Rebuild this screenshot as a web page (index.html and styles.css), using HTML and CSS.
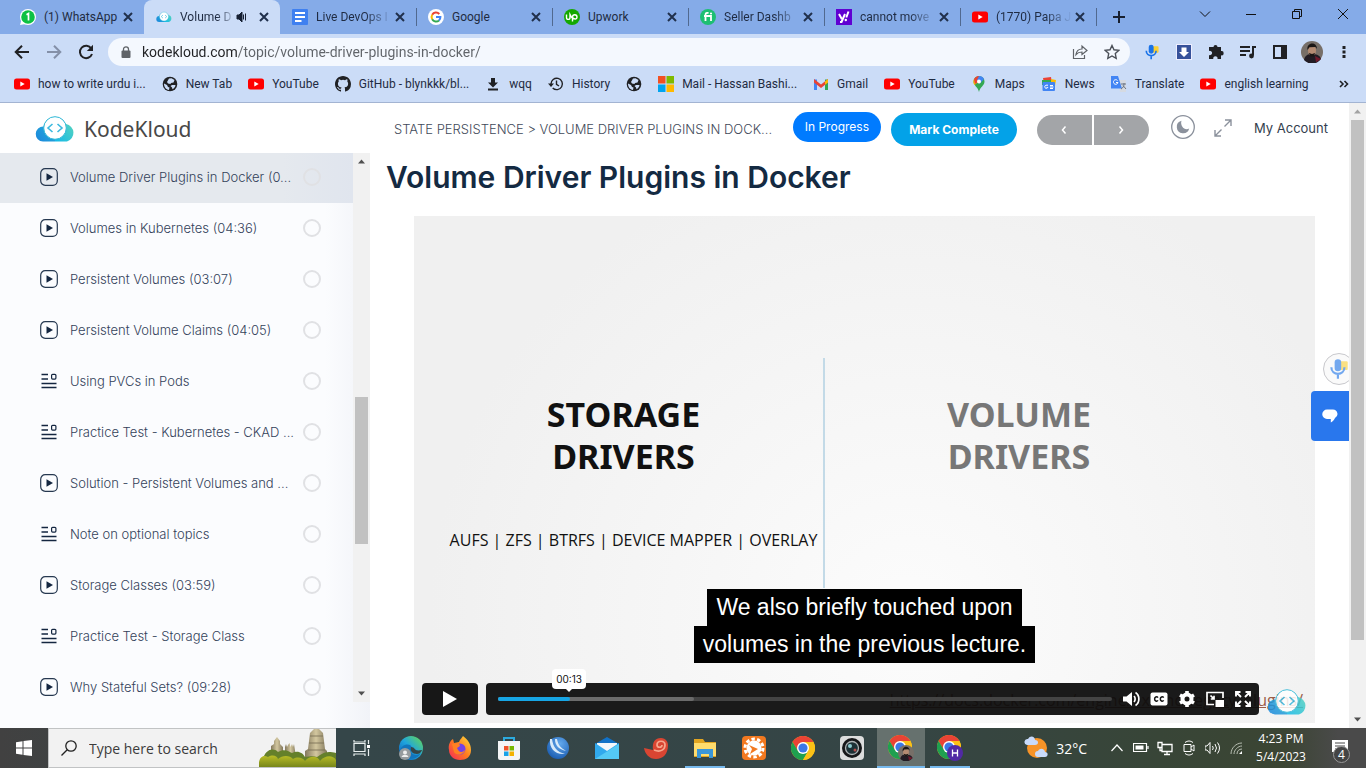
FILE: index.html
```html
<!DOCTYPE html>
<html lang="en">
<head>
<meta charset="utf-8">
<title>Volume Driver Plugins in Docker</title>
<link rel="stylesheet" href="styles.css">
</head>
<body>
<svg class="defs" aria-hidden="true">
  <defs>
    <linearGradient id="cloud-l" x1="0" y1="1" x2="1" y2="0"><stop offset="0" stop-color="#1b86dc"/><stop offset="1" stop-color="#25b7d8"/></linearGradient>
    <linearGradient id="cloud-r" x1="0" y1="1" x2="1" y2="0"><stop offset="0" stop-color="#12b9ea"/><stop offset="1" stop-color="#5ed6b8"/></linearGradient>
    <linearGradient id="edge" x1="0" y1="1" x2="1" y2="0"><stop offset="0" stop-color="#0b57b5"/><stop offset=".5" stop-color="#1fa5de"/><stop offset="1" stop-color="#6bdc4c"/></linearGradient>
    <linearGradient id="fire" x1="0" y1="1" x2="1" y2="0"><stop offset="0" stop-color="#f5255c"/><stop offset=".5" stop-color="#ff7a1f"/><stop offset="1" stop-color="#ffe03c"/></linearGradient>
    <radialGradient id="orb" cx=".6" cy=".3" r=".8"><stop offset="0" stop-color="#62a8ec"/><stop offset="1" stop-color="#1557ad"/></radialGradient>
    <linearGradient id="stone" x1="0" y1="0" x2="1" y2="0"><stop offset="0" stop-color="#83785c"/><stop offset=".5" stop-color="#d3c79f"/><stop offset="1" stop-color="#83785c"/></linearGradient>
    <linearGradient id="bush" x1="0" y1="0" x2="0" y2="1"><stop offset="0" stop-color="#b9bd26"/><stop offset="1" stop-color="#77861a"/></linearGradient>
  </defs>
  <symbol id="x" viewBox="0 0 16 16"><path d="M4 4l8 8M12 4l-8 8" stroke="#20304c" stroke-width="2" fill="none"/></symbol>
  <symbol id="yt" viewBox="0 0 16 16"><rect y="2.500" width="16" height="11" rx="2.500" fill="#f00"/><path d="M6.300 5.500v5l4.400-2.500z" fill="#fff"/></symbol>
  <symbol id="cloud" viewBox="0 0 40 26">
    <path d="M8 25.500a7.500 7.500 0 0 1 .5-15C10 5 14 2 20 3v22.500z" fill="url(#cloud-l)"/>
    <path d="M20 25.500V3c6 0 9 2 11 5a9 9 0 0 1 1 17.500z" fill="url(#cloud-r)"/>
    <circle cx="20" cy="12" r="11.300" fill="#fff" stroke="#2db7d6"/>
    <path d="M17.500 8l-4.500 4 4.500 4M22.500 8l4.500 4-4.500 4" fill="none" stroke="#3cb9df" stroke-width="1.600"/>
  </symbol>
  <symbol id="globe" viewBox="0 0 16 16"><circle cx="8" cy="8" r="7.300" fill="#202124"/><path d="M2 7.500l3 1.500 1 2 1.500.6L7 14C4 13.500 2 11 2 7.500zM7 2.500l2.500-.3L12.500 4l-1 2.500-2.500.4L8.500 8 6 7.500 5 6zM10 9h3.500c-.2 2-1.500 3.500-3 4.200L10 11.500 8.500 10z" fill="#cbdcf7"/></symbol>
  <symbol id="chrome" viewBox="0 0 24 24"><circle cx="12" cy="12" r="12" fill="#fbc116"/><path d="M1.600 6A12 12 0 0 1 22.400 6H12L6.800 15z" fill="#ea4335"/><path d="M1.600 6A12 12 0 0 0 12 24l5.200-9-5.200 2-5-2z" fill="#1fa050"/><path d="M12 6h10.400A12 12 0 0 1 12 24l5.200-9z" fill="#fbc116"/><circle cx="12" cy="12" r="6" fill="#fff"/><circle cx="12" cy="12" r="4.600" fill="#3b78e7"/></symbol>
  <symbol id="face" viewBox="0 0 22 22"><circle cx="11" cy="11" r="11" fill="#776f68"/><path d="M3 19c1-5 4-6 8-6s8 1 9 5a11 11 0 0 1-17 1z" fill="#221c24"/><path d="M14 15l6 3-5 3.300z" fill="#701a2b"/><ellipse cx="11" cy="9.500" rx="4" ry="5.500" fill="#b48b72"/><path d="M6.500 9C5 1 16 0 16 8l-1.500-2-6 .2zM8 12l3 1 3-1-1 3.500h-4z" fill="#1b1715"/></symbol>
  <symbol id="play" viewBox="0 0 18 18"><rect x=".7" y=".7" width="16.600" height="16.600" rx="4.500" fill="none" stroke="#263850" stroke-width="1.200"/><path d="M6.500 5.300v7.400L13 9z" fill="#142640"/></symbol>
  <symbol id="doc" viewBox="0 0 18 18"><path d="M1.500 2.500h6.500M1.500 7h6.500M1.500 11.500h15M1.500 15.500h15" stroke="#142640" stroke-width="1.300"/><rect x="11.600" y="2.300" width="4.300" height="4.800" rx="1" fill="none" stroke="#142640" stroke-width="1.200"/></symbol>
  <symbol id="mic" viewBox="0 0 20 22"><rect x="10" y="4" width="8" height="8" rx="1" fill="#fbd033"/><rect x="6" y="2" width="6" height="11" rx="3" fill="#1a73e8"/><path d="M3 9.500c0 8 12 8 12 0M9 15.500V20" fill="none" stroke="#1a73e8" stroke-width="2"/></symbol>
</svg>

<header class="browser">
  <nav class="tabs" aria-label="Tabs">
    <div class="tab"><svg class="i16" viewBox="0 0 16 16"><circle cx="8" cy="8" r="8" fill="#fff"/><path d="M0 16l1.500-5 4 4z" fill="#fff"/><circle cx="8" cy="8" r="6.800" fill="#0dc143"/><path d="M6.500 5.800L8.500 4.600V11.500" fill="none" stroke="#fff" stroke-width="1.700"/></svg><span class="tab-name">(1) WhatsApp</span><button class="close" aria-label="Close"><svg class="i16"><use href="#x"/></svg></button></div>
    <div class="tab active"><svg class="i16"><use href="#cloud"/></svg><span class="tab-name fade">Volume D</span><svg class="i12" viewBox="0 0 12 12"><path d="M1 4h2l3-3v10L3 8H1zM7.500 3.500v5M9.500 2.500v7" fill="#172033" stroke="#172033"/></svg><button class="close" aria-label="Close"><svg class="i16"><use href="#x"/></svg></button></div>
    <div class="tab"><svg class="i16" viewBox="0 0 16 16"><rect width="16" height="16" rx="1" fill="#3f80f0"/><path d="M3 4h10M3 8h10M3 12h6.500" stroke="#fff" stroke-width="1.800"/></svg><span class="tab-name fade">Live DevOps I</span><button class="close" aria-label="Close"><svg class="i16"><use href="#x"/></svg></button></div>
    <div class="tab"><svg class="i16" viewBox="0 0 16 16"><circle cx="8" cy="8" r="8" fill="#fff"/><g fill="none" stroke-width="2"><path d="M4.200 5.800A4.400 4.400 0 0 1 11.300 5" stroke="#ea4335"/><path d="M4.200 5.800a4.400 4.400 0 0 0 0 4.400" stroke="#fbbc05"/><path d="M4.200 10.200a4.400 4.400 0 0 0 6.800 1.200" stroke="#34a853"/><path d="M11 11.400a4.400 4.400 0 0 0 1.400-3.300H8" stroke="#4285f4"/></g></svg><span class="tab-name">Google</span><button class="close" aria-label="Close"><svg class="i16"><use href="#x"/></svg></button></div>
    <div class="tab"><svg class="i16" viewBox="0 0 16 16"><circle cx="8" cy="8" r="8" fill="#15a800"/><path d="M2.500 5.500v3c0 2.500 3.500 2.500 3.500 0v-3l2 3.500M8.500 12.500V8c0-3 4.500-3 4.500 0S9.500 10.500 8 7.500" fill="none" stroke="#fff" stroke-width="1.400"/></svg><span class="tab-name">Upwork</span><button class="close" aria-label="Close"><svg class="i16"><use href="#x"/></svg></button></div>
    <div class="tab"><svg class="i16" viewBox="0 0 16 16"><circle cx="8" cy="8" r="8" fill="#1dbf73"/><path d="M5.500 12V6c0-2 1-2.300 3-2M4 7h7v5" fill="none" stroke="#fff" stroke-width="1.800"/><circle cx="11" cy="4.500" r="1.100" fill="#fff"/></svg><span class="tab-name fade">Seller Dashb</span><button class="close" aria-label="Close"><svg class="i16"><use href="#x"/></svg></button></div>
    <div class="tab"><svg class="i16" viewBox="0 0 16 16"><rect width="16" height="16" fill="#6001d2"/><path d="M3 5l2.800 5M9 5l-3.500 8H4M12.500 2.500L10.300 8.500" fill="none" stroke="#fff" stroke-width="2"/><circle cx="9.800" cy="11" r="1.200" fill="#fff"/></svg><span class="tab-name fade">cannot move</span><button class="close" aria-label="Close"><svg class="i16"><use href="#x"/></svg></button></div>
    <div class="tab"><svg class="i16"><use href="#yt"/></svg><span class="tab-name fade">(1770) Papa J</span><button class="close" aria-label="Close"><svg class="i16"><use href="#x"/></svg></button></div>
    <button class="new-tab" aria-label="New tab"><svg class="i16" viewBox="0 0 16 16"><path d="M8 2v12M2 8h12" stroke="#182030" stroke-width="2"/></svg></button>
    <div class="window-buttons">
      <button aria-label="Search tabs"><svg class="i12" viewBox="0 0 12 12"><path d="M1 3.500l5 5 5-5" fill="none" stroke="#111"/></svg></button>
      <button aria-label="Minimize"><svg class="i12" viewBox="0 0 12 12"><path d="M1 6.500h10" stroke="#111"/></svg></button>
      <button aria-label="Restore"><svg class="i12" viewBox="0 0 12 12"><path d="M1.500 3.500h7v7h-7zM3.500 3.500v-2h7v7h-2" fill="none" stroke="#111"/></svg></button>
      <button aria-label="Close window"><svg class="i12" viewBox="0 0 12 12"><path d="M1 1l10 10M11 1L1 11" stroke="#111"/></svg></button>
    </div>
  </nav>
  <div class="toolbar">
    <div class="nav-buttons">
      <button aria-label="Back"><svg class="i16" viewBox="0 0 16 16"><path d="M15 8H2M8 1.700L1.700 8 8 14.300" fill="none" stroke="#202124" stroke-width="2"/></svg></button>
      <button aria-label="Forward"><svg class="i16" viewBox="0 0 16 16"><path d="M1 8h13M8 1.700L14.300 8 8 14.300" fill="none" stroke="#8490a8" stroke-width="2"/></svg></button>
      <button aria-label="Reload"><svg class="i16" viewBox="0 0 16 16"><path d="M13.300 4.500A6.200 6.200 0 1 0 14 10" fill="none" stroke="#202124" stroke-width="2"/><path d="M15 .8V7H8.800z" fill="#202124"/></svg></button>
    </div>
    <label class="omnibox">
      <svg class="i12" viewBox="0 0 12 12"><rect x="1.500" y="4.500" width="9" height="7.500" rx="1" fill="#5f6368"/><path d="M3.500 5V3.200c0-3.200 5-3.200 5 0V5" fill="none" stroke="#5f6368" stroke-width="1.300"/></svg>
      <input class="url" aria-label="Address" value="kodekloud.com/topic/volume-driver-plugins-in-docker/">
      <svg class="i16" viewBox="0 0 16 16"><path d="M1.500 5v9.500h11V11M4 10.500C4.500 7 7 5 10 5V2l5 4.500-5 4V8C7 8 5.500 8.700 4 10.500z" fill="none" stroke="#5f6368" stroke-width="1.200"/></svg>
      <svg class="i16" viewBox="0 0 16 16"><path d="M8 1.500l2 4.300 4.700.6-3.400 3.200.9 4.700L8 12l-4.200 2.300.9-4.700-3.400-3.200L6 5.800z" fill="none" stroke="#4b5058" stroke-width="1.400"/></svg>
    </label>
    <div class="extensions">
      <button aria-label="Voice typing"><svg class="i18"><use href="#mic"/></svg></button>
      <button aria-label="Downloader"><svg class="i16" viewBox="0 0 16 16"><rect x=".5" y=".5" width="15" height="15" fill="#36519a" stroke="#eef"/><path d="M5.500 3.500h5V8H13l-5 5-5-5h2.500z" fill="#fff"/></svg></button>
      <button aria-label="Extensions"><svg class="i16" viewBox="0 0 16 16"><path d="M1 5V3h4.500a2 2 0 1 1 4 0H13v4a2.200 2.200 0 1 1 0 4.300V15H9.500a2.200 2.200 0 1 0-4.200 0H1v-4a2.200 2.200 0 1 0 0-4z" fill="#202124"/></svg></button>
      <button aria-label="Media"><svg class="i16" viewBox="0 0 16 16"><path d="M0 3h10M0 7h10M0 11h6M13 11.500V3h3" fill="none" stroke="#202124" stroke-width="2"/><circle cx="11.500" cy="12" r="2.400" fill="#202124"/></svg></button>
      <button aria-label="Side panel"><svg class="i16" viewBox="0 0 16 16"><path d="M1 1h14v14H1zM3 3v10h6V3z" fill="#202124" fill-rule="evenodd"/></svg></button>
      <button aria-label="Profile"><svg class="i22"><use href="#face"/></svg></button>
      <button aria-label="Menu"><svg class="i16" viewBox="0 0 16 16"><path d="M6.500 2h3v3h-3zM6.500 6.500h3v3h-3zM6.500 11h3v3h-3z" fill="#202124"/></svg></button>
    </div>
  </div>
  <nav class="bookmarks" aria-label="Bookmarks">
    <a href="#"><svg class="i16"><use href="#yt"/></svg>how to write urdu i...</a>
    <a href="#"><svg class="i16"><use href="#globe"/></svg>New Tab</a>
    <a href="#"><svg class="i16"><use href="#yt"/></svg>YouTube</a>
    <a href="#"><svg class="i16" viewBox="0 0 16 16"><path fill="#202124" d="M8 0C3.580 0 0 3.580 0 8c0 3.540 2.290 6.530 5.470 7.590.4.070.55-.17.55-.38v-1.490c-2.010.37-2.530-.49-2.690-.94-.09-.23-.48-.94-.82-1.130-.28-.15-.68-.52-.01-.53.63-.01 1.080.58 1.230.82.72 1.210 1.870.87 2.330.66.07-.52.280-.87.510-1.070-1.780-.2-3.640-.89-3.640-3.950 0-.87.310-1.590.82-2.150-.08-.2-.36-1.020.08-2.120 0 0 .67-.21 2.200.82a7.600 7.600 0 0 1 4 0c1.530-1.040 2.200-.82 2.200-.82.440 1.100.160 1.920.08 2.120.51.560.82 1.270.82 2.150 0 3.070-1.870 3.750-3.650 3.950.29.250.54.730.54 1.480v2.200c0 .21.150.46.550.38A8 8 0 0 0 16 8c0-4.420-3.580-8-8-8z"/></svg>GitHub - blynkkk/bl...</a>
    <a href="#"><svg class="i16" viewBox="0 0 16 16"><path d="M6 2h4v4.500h3L8 11.500 3 6.500h3zM3 12.500h10v2H3z" fill="#202124"/></svg>wqq</a>
    <a href="#"><svg class="i16" viewBox="0 0 16 16"><path d="M3 8a5.700 5.700 0 1 1 1.700 4M8.500 4.500V8.300L11 10" fill="none" stroke="#202124" stroke-width="1.400"/><path d="M0 7.500h6L3 11z" fill="#202124"/></svg>History</a>
    <a href="#" aria-label="Web page"><svg class="i16"><use href="#globe"/></svg></a>
    <a href="#"><svg class="i16" viewBox="0 0 16 16"><path d="M0 0h7.500v7.500H0z" fill="#f25022"/><path d="M8.500 0H16v7.500H8.500z" fill="#7fba00"/><path d="M0 8.500h7.500V16H0z" fill="#00a4ef"/><path d="M8.500 8.500H16V16H8.500z" fill="#ffb900"/></svg>Mail - Hassan Bashi...</a>
    <a href="#"><svg class="i16" viewBox="0 0 16 16"><path d="M1 3.500h3V14H1z" fill="#4285f4"/><path d="M12 3.500h3V14h-3z" fill="#34a853"/><path d="M1 3l7 5.500L15 3v3.500L8 12 1 6.500z" fill="#ea4335"/><path d="M12 5.400l3-2.400v3.500l-3 2.300z" fill="#fbbc04"/></svg>Gmail</a>
    <a href="#"><svg class="i16"><use href="#yt"/></svg>YouTube</a>
    <a href="#"><svg class="i16" viewBox="0 0 16 16"><path d="M8 16C7 11 2.500 9.500 2.500 5.500a5.500 5.500 0 0 1 11 0C13.500 9.500 9 11 8 16z" fill="#34a853"/><path d="M3.500 9A5.500 5.500 0 0 1 4 2l4 3.500z" fill="#fbbc04"/><path d="M3 3.500A5.500 5.500 0 0 1 8 0v5.500L4 8z" fill="#ea4335"/><path d="M8 0c2.500 0 4 1 5 3L8.500 8 6 4z" fill="#4285f4"/><circle cx="8" cy="5.500" r="2" fill="#fff"/></svg>Maps</a>
    <a href="#"><svg class="i16" viewBox="0 0 16 16"><path d="M2 2l8-1 1 6H3z" fill="#ea4335"/><path d="M1 4h10v5H1z" fill="#34a853"/><path d="M10 3l5 1-1 6-4-2z" fill="#fbbc04"/><rect x="1.500" y="6" width="12.500" height="9" rx="1" fill="#4285f4"/><path d="M7 9.200H5a1.600 1.600 0 1 0 1.800 2.200H5.500M9 9.500h3M9 11h3.500M9 12.500h3" stroke="#fff" fill="none"/></svg>News</a>
    <a href="#"><svg class="i16" viewBox="0 0 16 16"><path d="M7 4h8v12H9z" fill="#d5dae2"/><path d="M0 0h7l4 12.500H0z" fill="#4285f4"/><path d="M6.500 4.500A2.300 2.300 0 1 0 7 6.500H5" stroke="#fff" fill="none"/><path d="M10 8h5M13 7v1c0 2-1 4-3 5M12 9.500l3 3.500" stroke="#6a7483" fill="none"/></svg>Translate</a>
    <a href="#"><svg class="i16"><use href="#yt"/></svg>english learning</a>
    <button class="more" aria-label="More bookmarks"><svg class="i12" viewBox="0 0 12 12"><path d="M2 3l3 3-3 3M6.500 3l3 3-3 3" fill="none" stroke="#202124" stroke-width="1.600"/></svg></button>
  </nav>
</header>

<div class="viewport">
  <div class="page">
    <header class="site-header">
      <a class="brand" href="#"><svg class="brand-cloud"><use href="#cloud"/></svg>KodeKloud</a>
      <div class="crumbs"><a href="#">STATE PERSISTENCE</a> &gt; <a href="#">VOLUME DRIVER PLUGINS IN DOCK...</a></div>
      <span class="status">In Progress</span>
      <button class="complete">Mark Complete</button>
      <div class="pager">
        <button aria-label="Previous"><svg class="i12" viewBox="0 0 12 12"><path d="M7.500 2.500L4.500 6l3 3.500" fill="none" stroke="#fff" stroke-width="1.500"/></svg></button>
        <button aria-label="Next"><svg class="i12" viewBox="0 0 12 12"><path d="M4.500 2.500l3 3.500-3 3.500" fill="none" stroke="#fff" stroke-width="1.500"/></svg></button>
      </div>
      <button class="theme" aria-label="Dark mode"><svg class="i24" viewBox="0 0 24 24"><circle cx="12" cy="12" r="11.300" fill="none" stroke="#8b919c" stroke-width="1.300"/><path d="M10.500 5.800a6.300 6.300 0 1 0 7.700 7.700c-4.200 2.800-9.500-2.500-7.700-7.700z" fill="#8b919c"/></svg></button>
      <button class="expand" aria-label="Full width"><svg class="i18" viewBox="0 0 18 18"><path d="M11 1h6v6M17 1l-6.500 6.500M7.500 10.500L1 17M1 11v6h6" fill="none" stroke="#8b919c" stroke-width="1.400"/></svg></button>
      <a class="account" href="#">My Account</a>
    </header>
    <div class="columns">
      <aside class="sidebar">
        <div class="lesson-pane">
          <nav class="lessons" aria-label="Lessons">
            <a class="lesson current" href="#"><svg class="i18"><use href="#play"/></svg><span class="lesson-name">Volume Driver Plugins in Docker (0...</span><span class="ring"></span></a>
            <a class="lesson" href="#"><svg class="i18"><use href="#play"/></svg><span class="lesson-name">Volumes in Kubernetes (04:36)</span><span class="ring"></span></a>
            <a class="lesson" href="#"><svg class="i18"><use href="#play"/></svg><span class="lesson-name">Persistent Volumes (03:07)</span><span class="ring"></span></a>
            <a class="lesson" href="#"><svg class="i18"><use href="#play"/></svg><span class="lesson-name">Persistent Volume Claims (04:05)</span><span class="ring"></span></a>
            <a class="lesson" href="#"><svg class="i18"><use href="#doc"/></svg><span class="lesson-name">Using PVCs in Pods</span><span class="ring"></span></a>
            <a class="lesson" href="#"><svg class="i18"><use href="#doc"/></svg><span class="lesson-name">Practice Test - Kubernetes - CKAD ...</span><span class="ring"></span></a>
            <a class="lesson" href="#"><svg class="i18"><use href="#play"/></svg><span class="lesson-name">Solution - Persistent Volumes and ...</span><span class="ring"></span></a>
            <a class="lesson" href="#"><svg class="i18"><use href="#doc"/></svg><span class="lesson-name">Note on optional topics</span><span class="ring"></span></a>
            <a class="lesson" href="#"><svg class="i18"><use href="#play"/></svg><span class="lesson-name">Storage Classes (03:59)</span><span class="ring"></span></a>
            <a class="lesson" href="#"><svg class="i18"><use href="#doc"/></svg><span class="lesson-name">Practice Test - Storage Class</span><span class="ring"></span></a>
            <a class="lesson" href="#"><svg class="i18"><use href="#play"/></svg><span class="lesson-name">Why Stateful Sets? (09:28)</span><span class="ring"></span></a>
          </nav>
          <div class="scrollbar side-scroll"><svg viewBox="0 0 17 17"><path d="M5 10.500l3.500-4 3.500 4z" fill="#505050"/></svg><div class="track"><div class="thumb"></div></div><svg viewBox="0 0 17 17"><path d="M5 6.500l3.500 4 3.500-4z" fill="#505050"/></svg></div>
        </div>
      </aside>
      <main class="content">
        <h1>Volume Driver Plugins in Docker</h1>
        <section class="video" aria-label="Video player">
          <div class="slide">
            <div class="half left"><h2>STORAGE<br>DRIVERS</h2><p>AUFS | ZFS | BTRFS | DEVICE MAPPER | OVERLAY</p></div>
            <div class="half right"><h2>VOLUME<br>DRIVERS</h2></div>
          </div>
          <a class="source" href="#">https://docs.docker.com/engine/extend/legacy_plugins/</a>
          <div class="caption"><span>We also briefly touched upon</span><span>volumes in the previous lecture.</span></div>
          <div class="controls">
            <button class="play-button" aria-label="Play"><svg class="i16" viewBox="0 0 16 16"><path d="M1 0v16l14-8z" fill="#fff"/></svg></button>
            <div class="bar">
              <div class="progress"><div class="buffered"></div><div class="played"><span class="time">00:13</span></div></div>
              <button aria-label="Volume"><svg class="i18" viewBox="0 0 18 18"><path d="M1 6.500h3.500L10 2v14l-5.500-4.500H1z" fill="#fff"/><path d="M12 6c1.500 1.500 1.500 4.500 0 6M13.500 2.500c4.500 3 4.500 10 0 13" fill="none" stroke="#fff" stroke-width="1.700"/></svg></button>
              <button aria-label="Captions"><svg class="i18" viewBox="0 0 18 18"><rect x=".5" y="2.500" width="17" height="13" rx="2" fill="#fff"/><path d="M8 7.600c-1.200-1.500-3.400-.5-3.400 1.400s2.200 2.900 3.400 1.400M13.700 7.600c-1.200-1.500-3.400-.5-3.400 1.400s2.200 2.900 3.400 1.400" fill="none" stroke="#171717" stroke-width="1.500"/></svg></button>
              <button aria-label="Settings"><svg class="i18" viewBox="0 0 18 18"><circle cx="9" cy="9" r="4.500" fill="none" stroke="#fff" stroke-width="4"/><path d="M9 1v4M9 13v4M2 5l3.500 2M12.500 11l3.500 2M2 13l3.500-2M12.500 7L16 5" stroke="#fff" stroke-width="3.600"/></svg></button>
              <button aria-label="Picture in picture"><svg class="i18" viewBox="0 0 18 18"><path d="M8 14.500H1v-12h16V8M4.500 5.500L8 9M8 5.800V9H4.800" fill="none" stroke="#fff" stroke-width="1.700"/><path d="M9.500 10H18v7H9.500z" fill="#fff"/></svg></button>
              <button aria-label="Full screen"><svg class="i18" viewBox="0 0 18 18"><path d="M2 6.500V2h4.500M11.500 2H16v4.500M16 11.500V16h-4.500M6.500 16H2v-4.500M2 2l5 5M16 2l-5 5M16 16l-5-5M2 16l5-5" fill="none" stroke="#fff" stroke-width="1.900"/></svg></button>
            </div>
            <a class="watermark" href="#" aria-label="KodeKloud"><svg class="brand-cloud"><use href="#cloud"/></svg></a>
          </div>
        </section>
      </main>
    </div>
    <div class="floating">
      <button class="dictate" aria-label="Dictate"><svg class="i24"><use href="#mic"/></svg></button>
      <button class="chat" aria-label="Chat"><svg class="i16" viewBox="0 0 16 16"><path d="M5 1.500h6a4.500 4.500 0 0 1 2 8.500c-1 2-2.500 3.500-4.200 4.500V11H5a4.700 4.700 0 0 1 0-9.500z" fill="#fff"/></svg></button>
    </div>
  </div>
  <div class="scrollbar page-scroll"><svg viewBox="0 0 17 17"><path d="M5 10.500l3.500-4 3.500 4z" fill="#a3a3a3"/></svg><div class="track"><div class="thumb"></div></div><svg viewBox="0 0 17 17"><path d="M5 6.500l3.500 4 3.500-4z" fill="#505050"/></svg></div>
</div>

<footer class="taskbar">
  <button class="start" aria-label="Start"><svg class="i16" viewBox="0 0 16 16"><path d="M0 2.200L6.500 1.200v6.300H0zM7.500 1.100L16 0v7.500H7.500zM0 8.500h6.500v6.300L0 13.800zM7.500 8.500H16V16l-8.500-1.100z" fill="#fff"/></svg></button>
  <label class="search">
    <svg class="i16" viewBox="0 0 16 16"><circle cx="10" cy="6" r="5.200" fill="none" stroke="#222" stroke-width="1.300"/><path d="M6.200 9.800L.5 15.500" stroke="#222" stroke-width="1.300"/></svg>
    <input type="text" aria-label="Search" placeholder="Type here to search">
    <svg class="scene" viewBox="0 0 77 38">
      <path d="M12 28V17l3-2v-3l3-4 3 4v3l3 3v10z" fill="url(#stone)"/><path d="M26 28V18l1-3 1 3 1-2 1.500-2 1 4 1.500-3 1 3 1-3 2 13z" fill="url(#stone)"/>
      <path d="M46 32V22l3-2 2-16 2-2 2-2h5l2 2 2 2 2 16 2 2v10z" fill="url(#stone)"/><path d="M49 21h17M51 7h13M50 14h15" stroke="#756b50" stroke-width=".8"/>
      <path d="M4 30c2-9 10-12 15-7 7-4 11 0 14 1 6-3 11 0 13 4 6-1 9-1 12 0 5-3 8-7 19-4v14H4z" fill="#65802a"/>
      <path d="M0 38c-1-8 3-13 9-10 5-3 9-1 10 2 4-4 12-4 15 0 5-3 10-1 12 2 5-6 13-5 15 0 5-6 13-6 16-1v7z" fill="url(#bush)"/>
    </svg>
  </label>
  <nav class="apps" aria-label="Apps">
    <button aria-label="Task view"><svg class="i18" viewBox="0 0 18 18"><path d="M1 4.500h11v8H1zM1 1v2h11V1M1 17v-2h11v2M15.500 1v4M15.500 10v7" fill="none" stroke="#e8eeee" stroke-width="1.200"/><path d="M14 6h3v3h-3z" fill="#fff"/></svg></button>
    <button aria-label="Edge"><svg class="i24" viewBox="0 0 24 24"><circle cx="12" cy="12" r="12" fill="url(#edge)"/><path d="M1 16c0-8 11-10 12-4 0 1-2 2-1 4 2 4 8 3 10 1-3 6-12 8-18 3z" fill="#1275bc"/><path d="M12 11c5 0 2 5 11 3 0 0-1 4-5 4-5 0-7-3-6-7z" fill="#354649"/><circle cx="6" cy="18" r="6" fill="#969b9e"/><circle cx="6" cy="16.500" r="2" fill="#eee"/><path d="M2.500 21c1-3 6-3 7 0z" fill="#eee"/></svg></button>
    <button aria-label="Firefox"><svg class="i24" viewBox="0 0 24 24"><path d="M1 14c-1-5 1-9 4-11l1 4 5-1c1-3 3-4 4-6 5 4 8 8 8 14 0 7-5 10-11 10S1 20 1 14z" fill="url(#fire)"/><circle cx="12" cy="13" r="5.500" fill="#7542e5"/><path d="M4 8l7-1 1 3-3 2c2 5 5 5 8 2-1 5-9 6-11 2z" fill="#ff8123"/></svg></button>
    <button aria-label="Store"><svg class="i24" viewBox="0 0 24 24"><path d="M7 6V2h10v4" fill="none" stroke="#2caade" stroke-width="2"/><path d="M1 5h22v17q0 2-2 2H3q-2 0-2-2z" fill="#f4f5f6"/><path d="M7 10h4.500v4.500H7z" fill="#ef5329"/><path d="M12.500 10H17v4.500h-4.500z" fill="#77b800"/><path d="M7 15.500h4.500V20H7z" fill="#19a2e8"/><path d="M12.500 15.500H17V20h-4.500z" fill="#f4b200"/></svg></button>
    <button aria-label="Download manager"><svg class="i24" viewBox="0 0 24 24"><circle cx="12" cy="12" r="11" fill="url(#orb)"/><path d="M4 3c-1 9 5 16 15 15-8-2-12-7-13-15M9 3c0 7 4 10 11 12-5-3-8-6-9-12" fill="#d8eafa"/></svg></button>
    <button aria-label="Mail"><svg class="i24" viewBox="0 0 24 24"><path d="M0 8l12-7 12 7v15H0z" fill="#1172c8"/><path d="M2 7h20v11H2z" fill="#f2f7fb"/><path d="M0 7l12 8 12-8v16H0z" fill="#31a9ed"/><path d="M0 23L24 8v15z" fill="#54c9f5"/></svg></button>
    <button aria-label="Nautilus"><svg class="i24" viewBox="0 0 24 24"><path d="M0 12l9 2c-1-8 2-12 8-12 5 0 7 4 7 7 0 9-5 14-12 14C5 23 1 18 0 12z" fill="#d94532"/><path d="M10 14c7 3 11-1 11-5 0-5-8-5-8 0 0 3 5 3 5 0" fill="none" stroke="#f6a68d" stroke-width="1.700"/></svg></button>
    <button class="open" aria-label="File Explorer"><svg class="i24" viewBox="0 0 24 24"><path d="M1 3h9l2 3h11v15H1z" fill="#e2a521"/><path d="M1 7h22v13H1z" fill="#ffdc6d"/><path d="M4 13h16v9h-4v-4H8v4H4z" fill="#3a96d8"/></svg></button>
    <button aria-label="Player"><svg class="i24" viewBox="0 0 24 24"><rect width="24" height="24" rx="4" fill="#f27920"/><circle cx="12" cy="12" r="9" fill="none" stroke="#fff" stroke-width="3" stroke-dasharray="3.400 2.255"/><circle cx="12" cy="12" r="7.500" fill="#fff"/><path d="M7 9l9 4-8 5 2-5z" fill="#f27920"/></svg></button>
    <button aria-label="Chrome"><svg class="i24"><use href="#chrome"/></svg></button>
    <button aria-label="Camera"><svg class="i24" viewBox="0 0 24 24"><rect width="24" height="24" rx="4" fill="#dcdddd"/><circle cx="12" cy="12" r="10" fill="#161719"/><circle cx="12" cy="12" r="6.500" fill="#1d3136" stroke="#aeb3b5" stroke-width="1.300"/><circle cx="10" cy="10" r="2" fill="#8ecbd0"/><circle cx="15" cy="14" r="1.500" fill="#b64c49"/></svg></button>
    <button class="focused" aria-label="Chrome profile one"><svg class="i26" viewBox="0 0 26 26"><use href="#chrome" width="24" height="24"/><use href="#face" x="10" y="10" width="16" height="16"/></svg></button>
    <button class="open" aria-label="Chrome profile two"><svg class="i26" viewBox="0 0 26 26"><use href="#chrome" width="24" height="24"/><circle cx="18" cy="18" r="8" fill="#5129a5"/><path d="M15.500 14.500v7M20.500 14.500v7M15.500 18h5" stroke="#fff" stroke-width="1.300"/></svg></button>
  </nav>
  <div class="tray">
    <button class="weather"><svg class="i24" viewBox="0 0 24 24"><circle cx="13" cy="12" r="10" fill="#f79327"/><path d="M3 9a3 3 0 0 1 1-6c2-4 7-3 7 1 4 0 4 5 0 5zM14 21a3 3 0 0 1 0-6c2-4 7-2 7 1 4 0 3 5 0 5z" fill="#c9dafa"/></svg>32°C</button>
    <button aria-label="Hidden icons"><svg class="i12" viewBox="0 0 12 12"><path d="M.5 9L6 3l5.500 6" fill="none" stroke="#fff" stroke-width="1.200"/></svg></button>
    <button aria-label="Battery"><svg class="i16" viewBox="0 0 16 16"><path d="M.5 3.500h13v8H.5zM15 6v3" fill="none" stroke="#fff" stroke-width="1.200"/><path d="M2.500 5.500h8v4h-8z" fill="#fff"/></svg></button>
    <button aria-label="Network"><svg class="i16" viewBox="0 0 16 16"><path d="M5 4.500h10v7H5zM10 11.500v3M7 14.500h6M1 2.500h4v5H1zM3 7.500v3h2" fill="none" stroke="#fff" stroke-width="1.300"/></svg></button>
    <button aria-label="Camera in use"><svg class="i16" viewBox="0 0 16 16"><path d="M3 4.500h7v7H3zM10 7l3-2v6l-3-2M4 2.500c3-2 5-2 8 0M4 13.500c3 2 5 2 8 0" fill="none" stroke="#fff"/></svg></button>
    <button aria-label="Sound"><svg class="i16" viewBox="0 0 16 16"><path d="M0 6h2l3-3.500v11L2 10H0zM7.500 6q1.500 2 0 4M10 4q3 4 0 8M12.500 2.500q4 5.500 0 11" fill="none" stroke="#fff"/></svg></button>
    <button aria-label="Wi-Fi"><svg class="i16" viewBox="0 0 16 16"><path d="M2 14C2 8 7 3 13 3M5 14c0-4 4-8 8-8M8 14c0-3 2-5 5-5" fill="none" stroke="#b6bdb1"/><path d="M10 14l3-3v3z" fill="#fff"/></svg></button>
    <button class="clock"><span>4:23 PM</span><span>5/4/2023</span></button>
    <button class="notices" aria-label="4 notifications"><svg class="i18" viewBox="0 0 18 18"><path d="M1 1h16v12h-8l-3 3v-3H1z" fill="#fff"/><path d="M4 4h10M4 7h10M4 10h6" stroke="#484848" stroke-width="1.200"/></svg><span class="badge">4</span></button>
  </div>
</footer>
</body>
</html>
```
FILE: styles.css
```css
* { box-sizing: border-box; }
html, body { height: 100%; }
body {
  margin: 0;
  display: flex;
  flex-direction: column;
  overflow: hidden;
  font-family: "Open Sans", "Noto Sans", sans-serif;
  font-size: 12px;
  color: #1f2b42;
}
button { border: 0; padding: 0; background: none; font: inherit; color: inherit; display: flex; align-items: center; justify-content: center; }
input { border: 0; padding: 0; background: none; font: inherit; outline: 0; min-width: 0; }
a { color: inherit; text-decoration: none; }
svg { display: block; flex: none; }
.defs { position: absolute; width: 0; height: 0; }
.i12 { width: 12px; height: 12px; }
.i16 { width: 16px; height: 16px; }
.i18 { width: 18px; height: 18px; }
.i22 { width: 22px; height: 22px; }
.i24 { width: 24px; height: 24px; }
.i26 { width: 26px; height: 26px; }

/* Browser chrome */
.browser { flex: none; background: #cbdcf7; border-bottom: 1px solid #a3b4d2; font-family: Roboto, sans-serif; }
.tabs { display: flex; height: 34px; padding-left: 8px; background: #85abe8; }
.tab { display: flex; align-items: center; flex: 0 1 136px; min-width: 0; height: 34px; padding: 0 8px 0 12px; position: relative; }
.tab + .tab:not(.active)::after, .new-tab::after { content: ""; position: absolute; left: 0; top: 8px; width: 1px; height: 18px; background: #51698f; }
.tab.active + .tab::after { display: none; }
.tab.active { background: #cbdcf7; border-radius: 8px 8px 0 0; }
.tab-name { flex: 1; min-width: 0; margin: 0 -8px 0 8px; white-space: nowrap; }
.close { margin-left: 8px; }
.fade { -webkit-mask-image: linear-gradient(90deg, #000 65%, transparent); mask-image: linear-gradient(90deg, #000 65%, transparent); }
.tab .i12 { margin-left: 8px; }
.new-tab { position: relative; width: 46px; }
.window-buttons { display: flex; margin-left: auto; height: 28px; }
.window-buttons button { width: 46px; }
.toolbar { display: flex; align-items: center; height: 36px; }
.nav-buttons { display: flex; gap: 16px; padding: 0 14px; }
.omnibox { flex: 1; display: flex; align-items: center; gap: 16px; height: 28px; padding: 0 10px 0 12px; border-radius: 14px; background: #f4f8fe; }
.url { flex: 1; margin-left: -6px; font-size: 14px; color: transparent; background: linear-gradient(90deg, #202124 95px, #5f6368 95px); -webkit-background-clip: text; background-clip: text; }
.omnibox .i12 { height: 14px; }
.extensions { display: flex; padding: 0 6px; }
.extensions button { width: 32px; height: 32px; }
.bookmarks { display: flex; align-items: center; gap: 16px; height: 32px; padding: 0 16px 4px 14px; white-space: nowrap; }
.bookmarks a { display: flex; align-items: center; gap: 8px; }
.more { margin-left: auto; }

/* Page */
.viewport { flex: 1; min-height: 0; display: flex; background: #fff; }
.page { flex: 1; min-width: 0; display: flex; flex-direction: column; position: relative; font-family: Inter, sans-serif; font-size: 13px; }
.site-header { display: flex; align-items: center; flex: none; height: 50px; padding: 2px 21px 0 35px; }
.brand { display: flex; align-items: center; gap: 9px; width: 359px; font: 21px "Noto Sans", sans-serif; color: #484848; }
.brand-cloud { width: 40px; height: 26px; }
.crumbs { flex: 1; white-space: nowrap; color: #3f4a59; font-weight: 300; }
.status { padding: 0 12px; margin: 0 10px 4px 0; line-height: 30px; border-radius: 15px; background: #007bff; color: #fff; font-size: 12px; }
.complete { height: 33px; width: 126px; border-radius: 17px; background: #03a2e8; color: #fff; font-size: 12px; font-weight: 700; }
.pager { display: flex; gap: 2px; margin: 2px 22px 0 20px; }
.pager button { width: 55px; height: 30px; background: #a3a5a8; }
.pager button:first-child { border-radius: 15px 0 0 15px; }
.pager button:last-child { border-radius: 0 15px 15px 0; }
.expand { margin: 0 22px 2px 19px; }
.theme { margin-bottom: 4px; }
.account { color: #333e4e; padding-bottom: 2px; }
.columns { flex: 1; min-height: 0; display: flex; }
.sidebar { flex: 0 0 370px; background: linear-gradient(90deg, #fbfcfe 88%, #f1f3f8); overflow: hidden; }
.lesson-pane { display: flex; height: calc(100% - 26px); }
.lessons { flex: 1; overflow: hidden; }
.lesson { display: flex; align-items: center; gap: 12px; height: 50px; margin-bottom: 1px; padding: 0 32px 2px 40px; color: #33425a; font-weight: 300; }
.lesson.current { background: linear-gradient(90deg, #e5e9ee 80%, #e0e5ee); }
.lesson-name { flex: 1; min-width: 0; white-space: nowrap; }
.ring { flex: none; width: 18px; height: 18px; border: 2px solid #e0e1e4; border-radius: 50%; }
.scrollbar { flex: 0 0 17px; display: flex; flex-direction: column; background: #f1f1f1; }
.scrollbar svg { width: 17px; height: 17px; }
.track { flex: 1; padding: 0 2px; display: flex; flex-direction: column; }
.thumb { background: #c1c1c1; }
.side-scroll .thumb { margin-top: 227px; flex: 0 0 147px; }
.page-scroll .thumb { flex: 0 0 88%; }
.content { flex: 1; min-width: 0; padding: 0 34px 0 44px; }
h1 { margin: 0 0 0 -28px; height: 63px; font-size: 30px; line-height: 48px; font-weight: 600; color: #142a42; white-space: nowrap; }

/* Video */
.video { position: relative; aspect-ratio: 16 / 9; background: radial-gradient(circle at 55% 80%, #fcfcfc, #f0f0f0 75%); font-family: "Open Sans", sans-serif; }
.slide { display: grid; grid-template-columns: 411px 1fr; padding-top: 142px; text-align: center; }
.half { height: 230px; padding-top: 35px; }
.half h2 { margin: 0; font: 700 34px/42px "Noto Sans", sans-serif; }
.left { color: #111; border-right: 2px solid #c3dae7; padding-left: 10px; }
.left p { margin: 51px 0 0; padding-left: 20px; font-size: 16px; line-height: 24px; white-space: nowrap; }
.right { color: #777; padding-right: 102px; }
.source { position: absolute; right: 12px; bottom: 11px; font-size: 16px; line-height: 24px; color: #9a5c48; text-decoration: underline; }
.caption { position: absolute; left: 0; right: 0; bottom: 60px; display: flex; flex-direction: column; align-items: center; font: 23px/37px "Liberation Sans", Arial, sans-serif; color: #fff; }
.caption span { padding: 0 9px; background: #000; }
.controls { position: absolute; left: 8px; right: 8px; bottom: 8px; display: flex; gap: 8px; height: 32px; }
.play-button { width: 56px; border-radius: 4px; background: #171717; }
.bar { flex: 1; display: flex; align-items: center; gap: 10px; padding: 0 7px 0 12px; border-radius: 4px; background: rgba(12, 12, 12, .94); }
.progress { flex: 1; height: 4px; border-radius: 2px; background: #444; position: relative; }
.buffered { position: absolute; width: 32%; height: 4px; border-radius: 2px; background: #6b6b6b; }
.played { position: absolute; width: 72px; height: 4px; border-radius: 2px; background: #17a5e4; }
.time { position: absolute; right: -16px; bottom: 12px; padding: 0 4px; border-radius: 4px; background: #fff; color: #111; font: 10px/20px Inter, sans-serif; }
.time::after { content: ""; position: absolute; left: 50%; top: 100%; margin-left: -3px; border: 3px solid transparent; border-top-color: #fff; }
.watermark { display: flex; align-items: flex-end; opacity: .85; }
.floating { position: absolute; right: 0; top: 250px; display: flex; flex-direction: column; align-items: flex-end; gap: 6px; overflow: hidden; }
.dictate { width: 32px; height: 32px; margin-right: -6px; border: 1px solid #c8c8cc; border-radius: 50%; background: #fafafa; }
.dictate svg { opacity: .6; }
.chat { width: 38px; height: 50px; border-radius: 4px 0 0 4px; background: #2977ed; }

/* Taskbar */
.taskbar { flex: none; display: flex; height: 40px; color: #fff; background: linear-gradient(90deg, #414141 0, #354649 25%, #354545 65%, #384537 85%, #3b4533 94%, #4a4a4a 98%); }
.start { width: 48px; }
.search { flex: 0 0 288px; display: flex; align-items: center; padding-left: 12px; background: #f2f2f2; border: 1px solid #c1c3c4; border-width: 1px 0 1px 1px; overflow: hidden; }
.search input { flex: 1; margin-left: 12px; font-size: 14px; }
.search input::placeholder { color: #3c3c3c; opacity: 1; }
.scene { width: 77px; height: 38px; }
.apps { display: flex; gap: 1px; padding-left: 2px; }
.apps button { width: 48px; position: relative; }
.apps .focused { background: #66716e; }
.open::after, .focused::after { content: ""; position: absolute; left: 4px; right: 4px; bottom: 0; height: 2px; background: #76b9ed; }
.focused::after { left: 0; right: 0; }
.tray { display: flex; margin-left: auto; }
.tray button { width: 24px; }
.tray .weather { width: auto; gap: 8px; margin-right: 18px; font-size: 14px; }
.tray .clock { width: 64px; flex-direction: column; line-height: 18px; }
.tray .notices { width: 53px; position: relative; }
.badge { position: absolute; left: 20px; top: 18px; width: 17px; height: 17px; border: 1px solid #999; border-radius: 50%; background: #444; font-size: 12px; line-height: 15px; text-align: center; }
```
